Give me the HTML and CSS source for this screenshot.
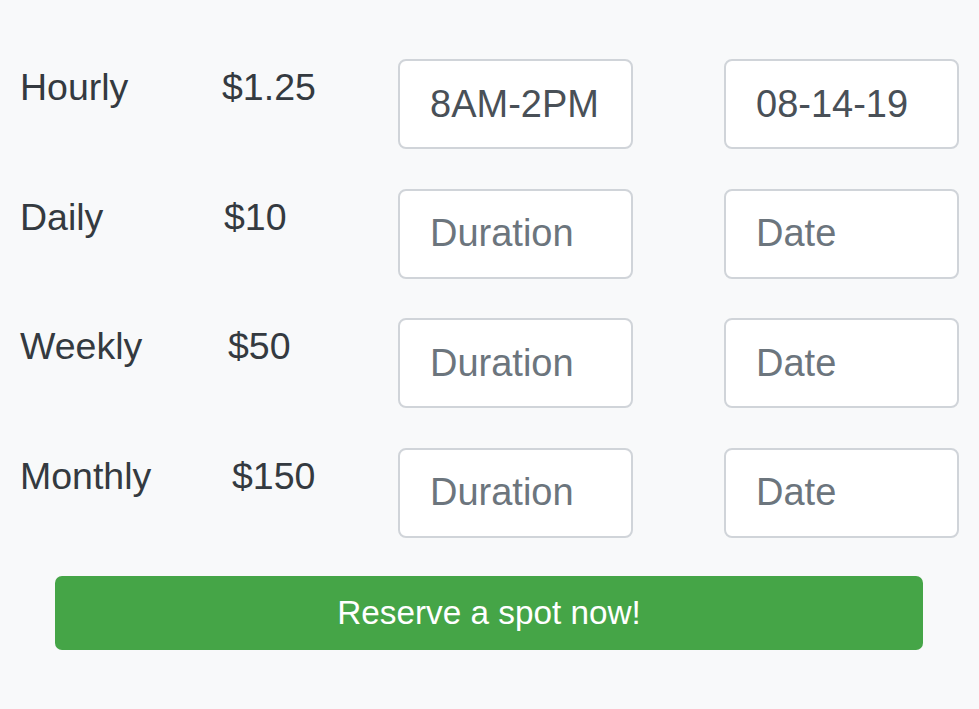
FILE: index.html
```html
<!DOCTYPE html>
<html lang="en">
<head>
<meta charset="utf-8">
<title>Reserve</title>
<link rel="stylesheet" href="styles.css">
</head>
<body>
<main class="page">
  <div class="rates">
    <div class="label">Hourly</div>
    <div class="price">$1.25</div>
    <input class="field" type="text" value="8AM-2PM">
    <input class="field field-date" type="text" value="08-14-19">

    <div class="label">Daily</div>
    <div class="price price-daily">$10</div>
    <input class="field" type="text" placeholder="Duration">
    <input class="field field-date" type="text" placeholder="Date">

    <div class="label">Weekly</div>
    <div class="price price-weekly">$50</div>
    <input class="field" type="text" placeholder="Duration">
    <input class="field field-date" type="text" placeholder="Date">

    <div class="label">Monthly</div>
    <div class="price price-monthly">$150</div>
    <input class="field" type="text" placeholder="Duration">
    <input class="field field-date" type="text" placeholder="Date">
  </div>
  <button class="reserve" type="button">Reserve a spot now!</button>
</main>
</body>
</html>
```
FILE: styles.css
```css
* { box-sizing: border-box; }
html, body {
  margin: 0;
  padding: 0;
  background: #f8f9fa;
}
body {
  font-family: "Liberation Sans", Arial, sans-serif;
  color: #343a40;
}
.page {
  padding-top: 59px;
  height: 709px;
}
.rates {
  display: grid;
  grid-template-columns: 202px 176px 235px 91px 235px;
  grid-auto-rows: 90px;
  row-gap: 39.5px;
  padding-left: 20px;
}
.label, .price {
  font-size: 37.5px;
  line-height: 1.5;
  white-space: nowrap;
}
.price-daily { margin-left: 2px; }
.price-weekly { margin-left: 6px; }
.price-monthly { margin-left: 10px; }
.field {
  grid-column: 3;
  width: 235px;
  height: 90px;
  margin: 0;
  padding: 15px 30px;
  font-family: "Liberation Sans", Arial, sans-serif;
  font-size: 38px;
  line-height: 56px;
  color: #495057;
  background: #fff;
  border: 2px solid #d0d4d9;
  border-radius: 8px;
  outline: none;
}
.field-date { grid-column: 5; }
.field::placeholder { color: #6c757d; opacity: 1; }
.reserve {
  display: block;
  margin: 38.5px 0 0 55px;
  width: 868px;
  height: 74px;
  padding: 0;
  border: none;
  border-radius: 7px;
  background: #45a547;
  color: #fff;
  font-family: "Liberation Sans", Arial, sans-serif;
  font-size: 33.3px;
  line-height: 74px;
  text-align: center;
  cursor: pointer;
}
```
